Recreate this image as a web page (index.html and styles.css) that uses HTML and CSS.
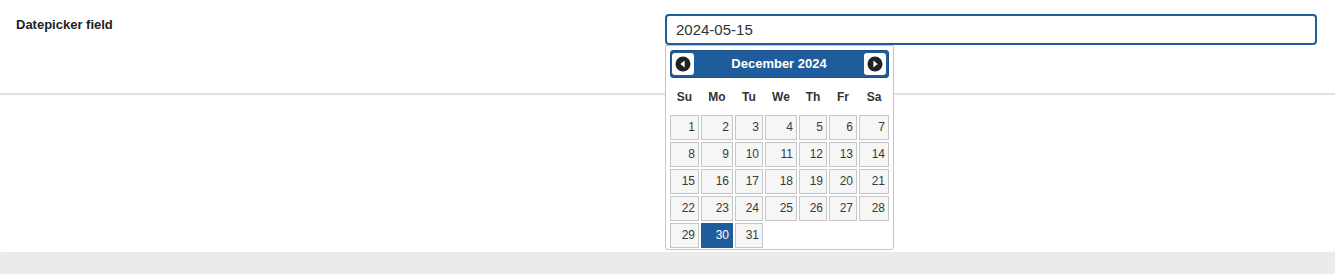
FILE: index.html
```html
<!DOCTYPE html>
<html lang="en">
<head>
<meta charset="utf-8">
<title>Datepicker field</title>
<link rel="stylesheet" href="styles.css">
</head>
<body>
<div class="card">
  <div class="row">
    <div class="label">Datepicker field</div>
    <div class="field">
      <input class="input" type="text" value="2024-05-15">
      <div class="datepicker">
        <div class="dp-header">
          <button class="dp-btn" aria-label="Prev">
            <svg width="16" height="16" viewBox="0 0 16 16"><circle cx="8" cy="8" r="7.5" fill="#222"/><polygon points="9.6,4.6 5.4,8 9.6,11.4" fill="#fff"/></svg>
          </button>
          <div class="dp-title">December 2024</div>
          <button class="dp-btn" aria-label="Next">
            <svg width="16" height="16" viewBox="0 0 16 16"><circle cx="8" cy="8" r="7.5" fill="#222"/><polygon points="6.4,4.6 10.6,8 6.4,11.4" fill="#fff"/></svg>
          </button>
        </div>
        <table class="dp-table">
          <colgroup>
            <col class="c1"><col class="c2"><col class="c3"><col class="c4"><col class="c5"><col class="c6"><col class="c7">
          </colgroup>
          <thead>
            <tr><th>Su</th><th>Mo</th><th>Tu</th><th>We</th><th>Th</th><th>Fr</th><th>Sa</th></tr>
          </thead>
          <tbody>
            <tr><td><a>1</a></td><td><a>2</a></td><td><a>3</a></td><td><a>4</a></td><td><a>5</a></td><td><a>6</a></td><td><a>7</a></td></tr>
            <tr><td><a>8</a></td><td><a>9</a></td><td><a>10</a></td><td><a>11</a></td><td><a>12</a></td><td><a>13</a></td><td><a>14</a></td></tr>
            <tr><td><a>15</a></td><td><a>16</a></td><td><a>17</a></td><td><a>18</a></td><td><a>19</a></td><td><a>20</a></td><td><a>21</a></td></tr>
            <tr><td><a>22</a></td><td><a>23</a></td><td><a>24</a></td><td><a>25</a></td><td><a>26</a></td><td><a>27</a></td><td><a>28</a></td></tr>
            <tr><td><a>29</a></td><td><a class="active">30</a></td><td><a>31</a></td><td></td><td></td><td></td><td></td></tr>
          </tbody>
        </table>
      </div>
    </div>
  </div>
</div>
</body>
</html>
```

FILE: styles.css
```css
html, body {
  margin: 0;
  padding: 0;
}
body {
  background: #ebebec;
  font-family: "Liberation Sans", Arial, sans-serif;
  color: #1d2327;
}
.card {
  background: #fff;
  height: 252px;
  border-radius: 0 0 3px 3px;
}
.row {
  display: flex;
  height: 79px;
  padding: 14px 18px 0 16px;
  border-bottom: 2px solid #e1e1e2;
}
.label {
  width: 649px;
  flex: none;
  font-size: 13px;
  font-weight: bold;
  line-height: 20px;
  padding-top: 1px;
  color: #1d2327;
}
.field {
  position: relative;
  flex: 1;
}
.input {
  display: block;
  box-sizing: border-box;
  width: 100%;
  height: 31px;
  margin: 0;
  border: 2px solid #1f5c9c;
  border-radius: 4px;
  padding: 0 0 0 9px;
  font-family: "Liberation Sans", Arial, sans-serif;
  font-size: 15px;
  color: #2c3338;
  outline: none;
  background: #fff;
}
.datepicker {
  position: absolute;
  top: 31px;
  left: 0;
  box-sizing: border-box;
  width: 229px;
  padding: 4px 3px 0;
  background: #fff;
  border: 1px solid #c5c5c5;
  border-radius: 0 0 3px 3px;
  font-family: "Liberation Sans", Arial, sans-serif;
  z-index: 2;
}
.dp-header {
  display: flex;
  align-items: center;
  justify-content: space-between;
  box-sizing: border-box;
  height: 28px;
  margin: 0 1px;
  padding: 0 2px 0 1px;
  background: #1f5c9c;
  border: 1px solid #1a4f88;
  border-radius: 3px;
}
.dp-btn {
  display: flex;
  align-items: center;
  justify-content: center;
  width: 22px;
  height: 22px;
  padding: 0;
  border: 0;
  border-radius: 3px;
  background: #fff;
}
.dp-btn svg {
  display: block;
}
.dp-title {
  color: #fff;
  font-size: 13px;
  font-weight: bold;
  line-height: 16px;
}
.dp-table {
  width: 221px;
  border-collapse: collapse;
  table-layout: fixed;
  margin: 0;
}
.c1 { width: 31px; }
.c2 { width: 34px; }
.c3 { width: 30px; }
.c4 { width: 34px; }
.c5 { width: 30px; }
.c6 { width: 30px; }
.c7 { width: 32px; }
.dp-table th {
  padding: 12px 0 10px;
  font-size: 12px;
  line-height: 14px;
  font-weight: bold;
  color: #333;
  text-align: center;
}
.dp-table td {
  padding: 1px;
  border: 0;
}
.dp-table td a {
  display: block;
  box-sizing: border-box;
  height: 25px;
  padding: 0 3px 0 0;
  border: 1px solid #c5c5c5;
  background: #f6f6f6;
  color: #3a3a3a;
  font-size: 12px;
  line-height: 23px;
  text-align: right;
}
.dp-table td a.active {
  background: #1f5c9c;
  border-color: #1f5c9c;
  color: #fff;
}
```
